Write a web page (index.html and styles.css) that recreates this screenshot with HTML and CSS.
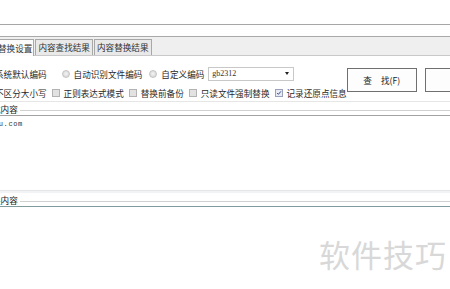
FILE: index.html
```html
<!DOCTYPE html>
<html lang="zh-CN">
<head>
    <meta charset="UTF-8">
    <title>内容替换</title>
    <link rel="stylesheet" href="styles.css">
</head>
<body>
    <div class="window">
        <div class="blank"></div>
        <div class="path-row"></div>

        <!-- Tabs -->
        <div class="tabbar">
            <div class="tab active">替换设置</div>
            <div class="tab">内容查找结果</div>
            <div class="tab">内容替换结果</div>
        </div>

        <!-- Options -->
        <div class="panel">
            <div class="options">
                <div class="row">
                    <span class="label first">系统默认编码</span>
                    <span class="radio"></span>
                    <span class="label">自动识别文件编码</span>
                    <span class="radio"></span>
                    <span class="label">自定义编码</span>
                    <div class="select">
                        <span>gb2312</span>
                        <span class="arrow"></span>
                    </div>
                </div>
                <div class="row">
                    <span class="label first">不区分大小写</span>
                    <span class="check"></span>
                    <span class="label">正则表达式模式</span>
                    <span class="check"></span>
                    <span class="label">替换前备份</span>
                    <span class="check"></span>
                    <span class="label">只读文件强制替换</span>
                    <span class="check checked">
                        <svg width="8" height="8" viewBox="0 0 8 8"><path d="M1.5 4 L3.2 5.8 L6.6 1.8" fill="none" stroke="#3a4a8a" stroke-width="1.3"/></svg>
                    </span>
                    <span class="label">记录还原点信息</span>
                </div>
            </div>
            <div class="buttons">
                <button class="btn"><span class="btn-gap">查</span>找(F)</button>
                <button class="btn"></button>
            </div>
        </div>

        <!-- Find content -->
        <div class="group">
            <div class="group-head"><span class="group-label">找内容</span><span class="group-line"></span></div>
            <div class="textbox">ru.com</div>
        </div>

        <!-- Replace content -->
        <div class="group second">
            <div class="group-head"><span class="group-label">换内容</span><span class="group-line"></span></div>
            <div class="textbox replace">
                <div class="watermark">软件技巧</div>
            </div>
        </div>
    </div>
</body>
</html>
```

FILE: styles.css
```css
body {
    margin: 0;
    width: 450px;
    height: 289px;
    overflow: hidden;
    background: #ffffff;
    font-family: "Noto Sans CJK SC", "Liberation Sans", sans-serif;
    font-size: 8.6px;
    color: #222;
}
.window {
    display: flex;
    flex-direction: column;
    height: 289px;
}
.blank {
    height: 24px;
}
.path-row {
    height: 11px;
    border-top: 1px solid #a6a6a6;
    background: #fefefe;
}
.tabbar {
    display: flex;
    align-items: flex-end;
    height: 18px;
    border-top: 1px solid #a9a9a9;
    border-bottom: 1px solid #c9c9c9;
    background: #efefef;
    margin-left: -10px;
}
.tab {
    height: 15px;
    line-height: 15px;
    padding: 0 2px;
    margin-right: 1px;
    border: 1px solid #a8a8a8;
    border-bottom: none;
    background: #e9e9e9;
    color: #333;
}
.tab.active {
    height: 16px;
    line-height: 16px;
    background: #fbfbfb;
    padding: 0 1px 0 7px;
    margin-bottom: -1px;
}
.panel {
    display: flex;
    justify-content: space-between;
    padding-top: 11px;
    height: 34px;
    border-bottom: 1px solid #e6e6e6;
}
.options {
    display: flex;
    flex-direction: column;
    gap: 6px;
    margin-left: -5px;
}
.row {
    display: flex;
    align-items: center;
    height: 13px;
}
.label {
    white-space: nowrap;
    color: #2a2a2a;
}
.radio {
    width: 8px;
    height: 8px;
    border-radius: 50%;
    border: 1px solid #c4c4c4;
    background: radial-gradient(circle at 50% 45%, #f4f4f4, #cfcfcf);
    box-sizing: border-box;
    margin: 0 4px 0 15px;
}
.radio + .label + .radio {
    margin-left: 7px;
}
.check {
    width: 8px;
    height: 8px;
    border: 1px solid #b3b3b3;
    background: #e2e2e2;
    box-sizing: border-box;
    margin: 0 4px 0 5px;
    display: flex;
    align-items: center;
    justify-content: center;
}
.check.checked {
    background: #e8eaf4;
    border-color: #9aa0b8;
}
.select {
    display: flex;
    justify-content: space-between;
    align-items: center;
    width: 86px;
    height: 14px;
    margin-left: 4px;
    border: 1px solid #c8c8c8;
    box-sizing: border-box;
    padding: 0 3px;
    font-family: "Liberation Serif", serif;
    font-size: 8px;
    color: #333;
}
.arrow {
    width: 0;
    height: 0;
    border-left: 2.5px solid transparent;
    border-right: 2.5px solid transparent;
    border-top: 3px solid #222;
    margin-right: 1px;
}
.buttons {
    display: flex;
    gap: 8px;
    margin-top: 1px;
    margin-right: -22px;
    align-self: flex-start;
}
.btn {
    width: 70px;
    height: 24px;
    border: 1px solid #707070;
    background: #fdfdfd;
    font-family: "Noto Sans CJK SC", sans-serif;
    font-size: 8.6px;
    color: #222;
    padding: 0;
}
.btn-gap {
    margin-right: 9px;
}
.group-head {
    display: flex;
    align-items: center;
    height: 13px;
    margin-left: -8px;
}
.group-label {
    white-space: nowrap;
    padding-right: 2px;
    color: #222;
}
.group-line {
    flex: 1;
    border-top: 1px solid #d0d0d0;
    margin-top: 3px;
}
.textbox {
    height: 70px;
    border-top: 1px solid #a2a2a2;
    padding: 4px 0 0 0;
    margin-left: -6px;
    font-family: "Liberation Mono", monospace;
    font-size: 7px;
    letter-spacing: 0.6px;
    color: #333;
    border-bottom: 1px solid #e6e6e6;
}
.second {
    border-top: 2px solid #f1f3f5;
}
.textbox.replace {
    border-top: 1px solid #7f9b9d;
    border-bottom: none;
    height: auto;
    padding: 0;
    margin-left: 0;
}
.watermark {
    text-align: right;
    padding: 29px 3px 0 0;
    font-family: "Noto Sans CJK SC", sans-serif;
    font-size: 31px;
    letter-spacing: 1px;
    color: #d8d8d8;
    line-height: 36px;
}
```
